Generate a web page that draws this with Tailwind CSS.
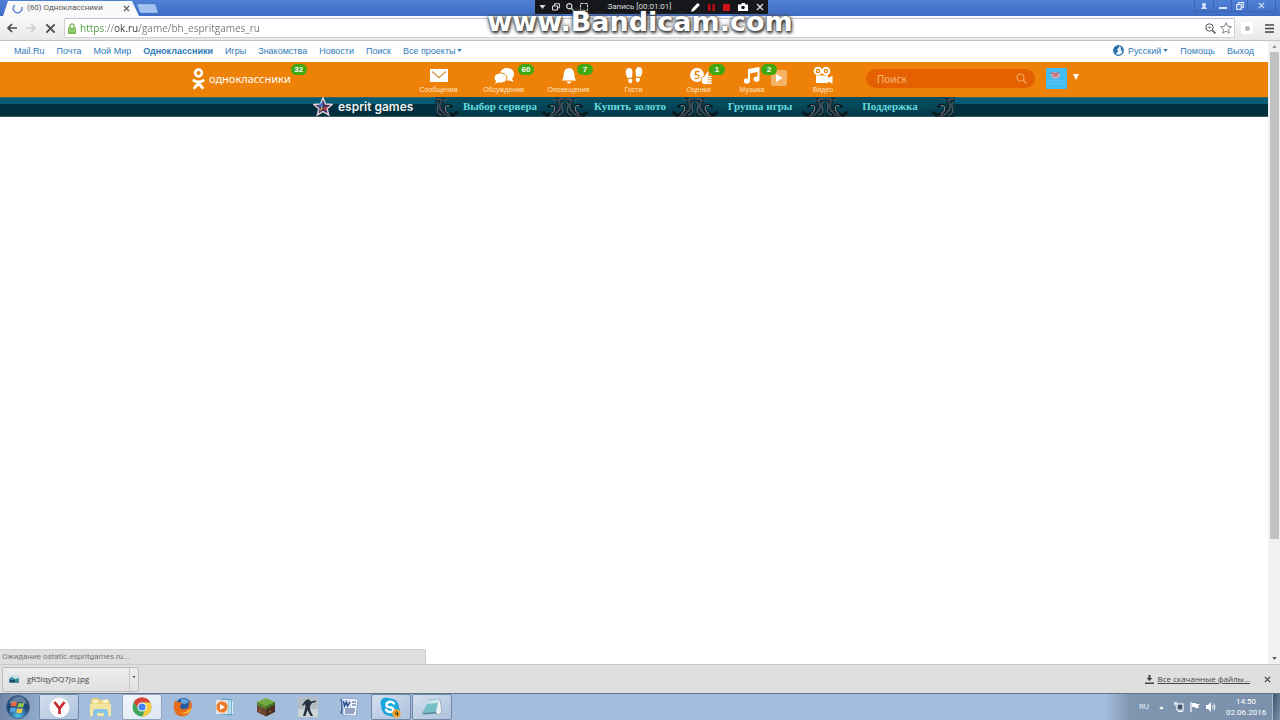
<!DOCTYPE html>
<html lang="ru">
<head>
  <meta charset="UTF-8">
  <title>(60) Одноклассники</title>
  <meta name="viewport" content="width=device-width, initial-scale=1.0">
  <script src="https://cdn.jsdelivr.net/npm/@tailwindcss/browser@4"></script>
</head>
<body class="relative flex h-screen flex-col overflow-hidden bg-white font-['Liberation_Sans',sans-serif] text-[9px] leading-3">

  <!-- shared shapes -->
  <svg class="hidden">
    <symbol id="swirl" viewBox="0 0 24 20">
      <path d="M0 0H10Q6 8 11 15L21 17 20 20H0z" fill="#101a21" fill-opacity=".6"/>
      <g fill="none" stroke-linecap="round">
        <path d="M1 1Q7 0 5 6T8 15Q11 19 16 19" stroke="#3d4953" stroke-width="2"/>
        <path d="M1 4Q4 6 2 11T6 18" stroke="#7f8b95" stroke-width=".8"/>
        <path d="M17 9Q11 5 10 10T15 17Q20 19 22 15" stroke="#0a151c" stroke-width="2.600"/>
        <path d="M14 8Q10 7 10 11T14 17" stroke="#9aa3aa" stroke-width="1"/>
        <path d="M4 1Q8 4 12 2" stroke="#56626c" stroke-width=".8"/>
      </g>
    </symbol>
    <symbol id="caret" viewBox="0 0 6 4"><path d="M0 0h6L3 4z" fill="currentColor"/></symbol>
    <symbol id="cross" viewBox="0 0 8 8"><path d="M1 1l6 6M7 1L1 7" stroke="currentColor" stroke-width="1.4"/></symbol>
  </svg>

  <!-- title bar -->
  <header class="flex h-4 shrink-0 justify-between bg-linear-to-b from-[#4f81d6] to-[#3f6cc4]">
    <div class="flex items-start">
      <div class="flex h-4 w-[140px] items-center gap-1 bg-[#f9f9fa] pl-3 font-[Roboto,sans-serif] text-[8px] text-[#555] [clip-path:polygon(3px_100%,8px_6%,132px_6%,139px_100%)]">
        <svg class="size-[11px] shrink-0" viewBox="0 0 11 11"><path d="M3 2A4.3 4.3 0 1 0 9.6 4" fill="none" stroke="#5b7fd8" stroke-width="1.4"/></svg>
        <span class="w-[92px] whitespace-nowrap">(60) Одноклассники</span>
        <button aria-label="Закрыть вкладку" class="text-[#555]"><svg class="size-[7px]"><use href="#cross"/></svg></button>
      </div>
      <button aria-label="Новая вкладка" class="mt-1 -ml-1 h-[9px] w-[22px]">
        <svg class="h-full w-full" viewBox="0 0 22 9"><path d="M1 0h17q1 0 1.500 1L22 9H5Q4 9 3.500 7z" fill="#a3c4f3" stroke="#6a97e0" stroke-width=".6"/></svg>
      </button>
    </div>
    <div class="flex h-3 pr-1 text-[#d6e3fa]">
      <button aria-label="Профиль" class="flex w-5 items-center justify-center border-x border-b border-[#3c64b4]"><svg class="size-2" viewBox="0 0 8 8"><path d="M4 1a1.500 1.500 0 0 1 1 3L7 7H1l2-3a1.500 1.500 0 0 1 1-3z" fill="currentColor"/></svg></button>
      <button aria-label="Свернуть" class="flex w-[17px] items-center justify-center border-b border-[#3c64b4]"><svg class="size-2" viewBox="0 0 8 8"><path d="M0 5h8v2H0z" fill="currentColor"/></svg></button>
      <button aria-label="Восстановить" class="flex w-[17px] items-center justify-center border-x border-b border-[#3c64b4]"><svg class="size-2" viewBox="0 0 8 8"><path d="M2.500 2.500V.7h4.800v4.600H5.500M.7 2.700h4.600v4.600H.7z" fill="none" stroke="currentColor" stroke-width="1.3"/></svg></button>
      <button aria-label="Закрыть" class="flex w-7 items-center justify-center border-r border-b border-[#3c64b4]"><svg class="size-[7px]"><use href="#cross"/></svg></button>
    </div>
  </header>

  <!-- address bar -->
  <div class="flex h-[25px] shrink-0 items-center border-b border-[#c4c4c4] bg-linear-to-b from-[#f9f9fa] to-[#e9e9ea] pr-1 pl-1.5 text-[#4d4d4d]">
    <button aria-label="Назад"><svg class="size-3" viewBox="0 0 12 12"><path d="M11 6H2M6 2L2 6l4 4" fill="none" stroke="currentColor" stroke-width="1.7"/></svg></button>
    <button aria-label="Вперёд" class="ml-[7px] text-[#ccc]"><svg class="size-3" viewBox="0 0 12 12"><path d="M1 6h9M6 2l4 4-4 4" fill="none" stroke="currentColor" stroke-width="1.7"/></svg></button>
    <button aria-label="Остановить" class="ml-2"><svg class="size-[11px]"><use href="#cross"/></svg></button>
    <div class="ml-2 flex h-5 flex-1 items-center gap-1 rounded-xs border border-[#d0d0d0] border-t-[#b9c4d6] bg-white pr-0.5 pl-[3px]">
      <svg class="h-[11px] w-2" viewBox="0 0 8 11"><path d="M2 5V3a2 2 0 0 1 4 0v2" fill="none" stroke="#7cb55c" stroke-width="1.3"/><path d="M0 4.500h8V11H0z" fill="#7dbd58"/><path d="M1 6.500h6M1 8.500h6" stroke="#b4dc9b" stroke-width=".7"/></svg>
      <input type="text" aria-label="Адрес" value="https://ok.ru/game/bh_espritgames_ru" class="min-w-0 flex-1 bg-[linear-gradient(90deg,#4a9a3a_25px,#888_25px,#888_35px,#333_35px,#333_59px,#777_59px)] bg-clip-text font-['Open_Sans',sans-serif] text-[10px] leading-4 text-transparent outline-none">
      <button aria-label="Масштаб"><svg class="size-[11px]" viewBox="0 0 11 11"><circle cx="4.500" cy="4.500" r="3.700" fill="none" stroke="#555"/><path d="M2.800 4.500h3.400M4.500 2.800v3.400" stroke="#888" stroke-width=".8"/><path d="M7.300 7.300L10.400 10.400" stroke="#555" stroke-width="1.5"/></svg></button>
      <button aria-label="В закладки"><svg class="size-3" viewBox="0 0 12 12"><path d="M6 .7l1.600 3.600 3.800.4-2.900 2.600.9 3.900L6 9.200l-3.400 2 .9-3.900L.6 4.700l3.800-.4z" fill="none" stroke="#777" stroke-width=".9"/></svg></button>
    </div>
    <button aria-label="Расширение" class="ml-1.5 flex size-3 items-center justify-center rounded-xs bg-white"><span class="size-[5px] rounded-full bg-[#b5b5b5]"></span></button>
    <button aria-label="Меню" class="mr-0.5 ml-3"><svg class="size-[9px]" viewBox="0 0 9 9"><path d="M0 1h9M0 4.500h9M0 8h9" stroke="#444" stroke-width="1.6"/></svg></button>
  </div>

  <!-- page -->
  <div class="flex min-h-0 flex-1">
    <main class="flex min-w-0 flex-1 flex-col">
      <nav class="flex h-[21px] shrink-0 items-center gap-3 px-3.5 pb-0.5 whitespace-nowrap text-[#2f7ab8]">
        <a href="#">Mail.Ru</a>
        <a href="#">Почта</a>
        <a href="#">Мой Мир</a>
        <a href="#" class="font-bold">Одноклассники</a>
        <a href="#">Игры</a>
        <a href="#">Знакомства</a>
        <a href="#">Новости</a>
        <a href="#">Поиск</a>
        <button class="flex items-center gap-0.5">Все проекты <svg class="h-[3px] w-[5px]"><use href="#caret"/></svg></button>
        <button class="ml-auto flex items-center gap-0.5">
          <svg class="mr-0.5 size-[11px]" viewBox="0 0 11 11"><circle cx="5.500" cy="5.500" r="4.800" fill="#eef6fc" stroke="#236da9" stroke-width="1.2"/><path d="M1 6Q.5 1 5.500 1L6 3 4 4l1 2-2 3Q1.500 8 1 6zM7.500 1.500L10 4 9.500 7 8 5z" fill="#236da9"/></svg>
          Русский <svg class="h-[3px] w-[5px]"><use href="#caret"/></svg>
        </button>
        <a href="#">Помощь</a>
        <a href="#">Выход</a>
      </nav>

      <!-- orange toolbar -->
      <div class="flex h-[35px] shrink-0 bg-[#ee8208] pl-48 text-white">
        <a href="#" class="flex h-full w-[214px] items-center pb-0.5">
          <svg class="h-[22px] w-[13px]" viewBox="0 0 13 22" fill="none" stroke="#fff" stroke-linecap="round"><circle cx="6.500" cy="5" r="3.400" stroke-width="2.600"/><path d="M1.800 12.500Q6.500 15.500 11.200 12.500M6.500 15L2.500 19.800M6.500 15l4 4.800" stroke-width="2.800"/></svg>
          <span class="ml-1 font-['Noto_Sans',sans-serif] text-[11px]">одноклассники</span>
          <span class="-mt-[18px] h-[11px] w-4 rounded-full bg-[#40a810] text-center text-[8px] leading-[11px] font-bold">32</span>
        </a>
        <div class="flex text-center text-[7px] leading-2 text-[#ffe4c4]">
          <a href="#" class="flex w-[65px] flex-col items-center pt-1">
            <svg class="h-5 w-[18px]" viewBox="0 0 18 20"><path d="M0 3h18v13H0z" fill="#fff"/><path d="M2 5.500l7 6 7-6" fill="none" stroke="#d89a4c" stroke-width="1.400"/></svg>
            Сообщения
          </a>
          <a href="#" class="relative flex w-[65px] flex-col items-center pt-1">
            <svg class="h-5 w-5" viewBox="0 0 20 20"><path d="M13 2c4 0 7 2.600 7 6 0 2-1 3.500-2 4.500l1.500 3.500-4-1.500H12c-3 0-6-2.500-6-6.200S9 2 13 2z" fill="#fff"/><path d="M6.500 7C10 7 13 9 13 12s-3 5-6.500 5H4l-3.500 1.500L1.500 15A5 5 0 0 1 0 12c0-3 3-5 6.500-5z" fill="#fff" stroke="#ee8208" stroke-width="1"/></svg>
            Обсуждения
            <span class="absolute top-0.5 right-0.5 h-[11px] w-4 rounded-full bg-[#40a810] text-[8px] leading-[11px] font-bold text-white">60</span>
          </a>
          <a href="#" class="relative flex w-[65px] flex-col items-center pt-1">
            <svg class="h-5 w-4" viewBox="0 0 16 20"><path d="M8 2q5 .5 5.200 6 .2 4.500 2 6.500H.8q1.800-2 2-6.500Q3 2.500 8 2zM5.500 15.500h5q-.5 2-2.500 2t-2.500-2z" fill="#fff"/></svg>
            Оповещения
            <span class="absolute top-0.5 right-2 h-[11px] w-4 rounded-full bg-[#40a810] text-[8px] leading-[11px] font-bold text-white">7</span>
          </a>
          <a href="#" class="flex w-[65px] flex-col items-center pt-1">
            <svg class="h-5 w-[18px]" viewBox="0 0 18 20" fill="#fff"><path d="M4 2c2.500 0 3.600 2 3.500 4.500L7 11.500 2.500 12Q.5 8.500.7 5.500 1 2.200 4 2zM3 13.300l4-.5q1 4-1.300 4.500T3 13.300zM14 1c3 .3 3.600 3 3.200 6l-1.700 4-4.500-.8-.5-4.500Q10.500 1 14 1zM11 11.600l4 .8q-.2 4-2.500 3.800T11 11.600z"/></svg>
            Гости
          </a>
          <a href="#" class="relative flex w-[65px] flex-col items-center pt-1">
            <svg class="ml-1 h-5 w-6" viewBox="0 0 24 20"><circle cx="8" cy="9" r="7" fill="#fff"/><path d="M10.500 5.500H6.700L6.300 8.600Q10 8 10 10.500T5.700 12.500" fill="none" stroke="#ee8208" stroke-width="1.300"/><path d="M12.500 11.500l3-1.500 3-5q2 .2 1 4.500H23v9h-8l-2.500-1.500z" fill="#fff" stroke="#ee8208" stroke-width=".8"/><path d="M18.500 11.500h5M18.500 13.700h5M18.500 16h5" stroke="#ee8208" stroke-width=".7"/></svg>
            Оценки
            <span class="absolute top-0.5 right-1.5 h-[11px] w-4 rounded-full bg-[#40a810] text-[8px] leading-[11px] font-bold text-white">1</span>
          </a>
          <a href="#" class="relative flex w-[42px] flex-col items-center pt-1">
            <svg class="h-5 w-4" viewBox="0 0 16 20"><path d="M4 3L15.500 1v12a3 2.500 0 1 1-2-2.200V6L6 7.500V15a3.200 2.600 0 1 1-2-2.300z" fill="#fff"/></svg>
            Музыка
            <span class="absolute top-0.5 -right-1 z-10 h-[11px] w-4 rounded-full bg-[#40a810] text-[8px] leading-[11px] font-bold text-white">2</span>
          </a>
          <button aria-label="Играть" class="mt-2 -ml-0.5 flex size-4 items-center justify-center rounded-xs bg-[#f5b267]"><svg class="size-2" viewBox="0 0 8 8"><path d="M1 0l6.500 4L1 8z" fill="#fff"/></svg></button>
          <a href="#" class="flex w-[72px] flex-col items-center pt-1">
            <svg class="h-5 w-5" viewBox="0 0 20 20"><g fill="none" stroke="#fff" stroke-width="2"><circle cx="5" cy="5" r="3.300"/><circle cx="13" cy="5" r="3.300"/></g><circle cx="5" cy="5" r="1" fill="#fff"/><circle cx="13" cy="5" r="1" fill="#fff"/><path d="M3 9.500h12V12l4.500-2v7.500L15 15.500V17H3z" fill="#fff"/></svg>
            Видео
          </a>
        </div>
        <label class="mt-[7px] ml-[7px] flex h-[19px] w-[169px] items-center rounded-full bg-[#e46000] pr-2 pl-[11px]">
          <input type="search" placeholder="Поиск" aria-label="Поиск" class="min-w-0 flex-1 bg-transparent font-['Noto_Sans',sans-serif] text-[10px] outline-none placeholder:text-[#f8b878]">
          <svg class="size-[11px]" viewBox="0 0 11 11" fill="none" stroke="#f5a45c" stroke-width="1.200"><circle cx="4.500" cy="4.500" r="3.500"/><path d="M7 7l3.500 3.500"/></svg>
        </label>
        <button aria-label="Профиль" class="ml-[11px] flex gap-1.5 self-start pt-1.5">
          <svg class="size-[21px]" viewBox="0 0 21 21"><rect width="21" height="21" rx="1" fill="#42bdf0"/><path d="M1 13h19M1 16h19" stroke="#6fd0f5" stroke-width=".7"/><path d="M5 5l4-1 5 2-1 4-5 1-3-3z" fill="#c9a9b8"/><path d="M5 5l5 1 3-2M7 8l5-1" stroke="#d64c4c" fill="none"/></svg>
          <svg class="mt-1.5 h-[6px] w-1.5" viewBox="0 0 6 6"><path d="M0 0h6L3 6z" fill="#fff"/></svg>
        </button>
      </div>

      <!-- game menu -->
      <nav class="flex h-5 shrink-0 border-b border-[#3c5b66] bg-[linear-gradient(#2f6363_1px,#075a73_1px,#075a73_7px,#022f3d_7px)] pl-[313px]">
        <a href="#" class="flex w-[122px] items-center gap-[5px] text-[#eef3f5]">
          <svg class="size-5 shrink-0" viewBox="0 0 20 20"><path d="M10 1l2.600 6 6.400.5-4.900 4.200 1.600 6.300L10 14.700 4.300 18l1.600-6.300L1 7.500 7.400 7z" fill="#402c58" stroke="#dccdd6" stroke-width="1.500"/><path d="M10 4v7L5 9z" fill="#4a70b8"/><path d="M10 11l5-2-3 5z" fill="#c8393f"/><path d="M10 11l-3 4 1-5z" fill="#e6a440"/></svg>
          <span class="whitespace-nowrap font-[Inter,sans-serif] text-[12px] font-semibold">esprit games</span>
        </a>
        <div class="flex font-['Liberation_Serif',serif] text-[11px] font-bold text-[#62dbdf]">
          <a href="#" class="flex w-[130px] justify-between bg-linear-to-b from-[#0a4d5f] via-[#04485a] to-[#023442] pt-px"><svg class="h-[19px] w-6"><use href="#swirl"/></svg><span class="mt-0.5 whitespace-nowrap">Выбор сервера</span><svg class="h-[19px] w-6 -scale-x-100"><use href="#swirl"/></svg></a>
          <a href="#" class="flex w-[130px] justify-between bg-linear-to-b from-[#0a4d5f] via-[#04485a] to-[#023442] pt-px"><svg class="h-[19px] w-6"><use href="#swirl"/></svg><span class="mt-0.5 whitespace-nowrap">Купить золото</span><svg class="h-[19px] w-6 -scale-x-100"><use href="#swirl"/></svg></a>
          <a href="#" class="flex w-[130px] justify-between bg-linear-to-b from-[#0a4d5f] via-[#04485a] to-[#023442] pt-px"><svg class="h-[19px] w-6"><use href="#swirl"/></svg><span class="mt-0.5 whitespace-nowrap">Группа игры</span><svg class="h-[19px] w-6 -scale-x-100"><use href="#swirl"/></svg></a>
          <a href="#" class="flex w-[130px] justify-between bg-linear-to-b from-[#0a4d5f] via-[#04485a] to-[#023442] pt-px"><svg class="h-[19px] w-6"><use href="#swirl"/></svg><span class="mt-0.5 whitespace-nowrap">Поддержка</span><svg class="h-[19px] w-6 -scale-x-100"><use href="#swirl"/></svg></a>
        </div>
      </nav>

      <div class="mt-auto h-[15px] w-[426px] rounded-tr-xs border-t border-r border-[#cfcfcf] bg-[#dedede] pl-0.5 font-[Roboto,sans-serif] text-[8px] leading-3.5 text-[#777]">Ожидание ostatic.espritgames.ru...</div>
    </main>

    <!-- scrollbar -->
    <div class="flex w-3 flex-col items-center justify-between bg-[#f1f1f1] py-1 text-[#555]">
      <svg class="h-[3px] w-[5px] rotate-180 text-[#999]"><use href="#caret"/></svg>
      <div class="mt-1 h-[487px] w-[9px] bg-[#c1c1c1]"></div>
      <svg class="mt-auto h-[3px] w-[5px]"><use href="#caret"/></svg>
    </div>
  </div>

  <!-- downloads -->
  <div class="flex h-[29px] shrink-0 items-center border-t border-[#c8c8c8] bg-[#dfdfdf] pr-[9px] pl-0.5 font-['Open_Sans',sans-serif] text-[8px] text-[#444]">
    <div class="flex h-[25px] w-[137px] rounded-xs border border-[#bdbdbd] bg-linear-to-b from-[#ececec] to-[#e0e0e0]">
      <button class="flex flex-1 items-center gap-2 border-r border-[#c6c6c6] pl-1.5">
        <svg class="size-2.5" viewBox="0 0 10 10"><path d="M0 1h10v8H0z" fill="#cfe2e8"/><path d="M0 5l3-2 3 2 4-1v5H0z" fill="#3a8ba0"/><path d="M1 6h5v2H1z" fill="#1f4e63"/></svg>
        gR5lqyOQ7Jo.jpg
      </button>
      <button aria-label="Действия" class="flex w-2 justify-center pt-2"><svg class="h-0.5 w-1"><use href="#caret"/></svg></button>
    </div>
    <svg class="ml-auto size-[9px]" viewBox="0 0 9 9"><path d="M3.500 0h2v3h2l-3 3-3-3h2zM0 7.500h9V9H0z" fill="#444"/></svg>
    <a href="#" class="mr-3.5 ml-1 whitespace-nowrap underline">Все скачанные файлы...</a>
    <button aria-label="Закрыть"><svg class="size-[7px]"><use href="#cross"/></svg></button>
  </div>

  <!-- taskbar -->
  <footer class="flex h-[27px] shrink-0 border-t border-[#62738b] bg-[linear-gradient(90deg,#6f86a8,#a5bddd_60px,#a5bddd_1105px,#7f96b0_1130px,#7b90aa)]">
    <button aria-label="Пуск" class="flex w-[39px] items-center justify-center pr-1">
      <svg class="size-6" viewBox="0 0 24 24"><defs><radialGradient id="orb" cy=".9"><stop stop-color="#4fc3e8"/><stop offset="1" stop-color="#1f4878"/></radialGradient></defs><circle cx="12" cy="12" r="11.500" fill="url(#orb)" stroke="#46688f"/><path d="M5.500 7.500q3-1.800 5.700-.2l-1 4.300q-2.700-1.300-5.700.2z" fill="#e8673a"/><path d="M12.500 7.700q3 1.300 6-.3l-1.200 4.400q-3 1.300-5.800-.1z" fill="#95c54a"/><path d="M4.200 13.200q3-1.500 5.700-.2l-1 4q-2.500-1-5 .2z" fill="#55a4e3"/><path d="M11.200 13.300q3 1.200 5.800 0l-1.200 4.200q-2.800 1.200-5.600-.1z" fill="#f6c545"/><path d="M3 9Q5 2 12 1.500T21 9Q12 5 3 9z" fill="#fff" fill-opacity=".3"/></svg>
    </button>
    <div class="flex w-[413px] justify-between">
      <button aria-label="Яндекс" class="flex w-10 items-center justify-center rounded-xs border border-[#7188a8] bg-linear-to-br from-[#d3dfee] to-[#adc2dd]"><svg class="size-[21px]" viewBox="0 0 21 21"><circle cx="10.500" cy="10.500" r="10" fill="#fafafa"/><path d="M5.500 5l5 6.500L15.500 5M10.500 11v6" fill="none" stroke="#c9262c" stroke-width="2.600"/></svg></button>
      <button aria-label="Проводник" class="flex w-10 items-center justify-center"><svg class="h-[21px] w-[23px]" viewBox="0 0 23 21"><path d="M2 3l2-2h5l1 2h10l1 2v14H1z" fill="#ead37f"/><path d="M4 3h5v3H4zM14 3l5-1v4h-5z" fill="#fbf3c7"/><path d="M1 7h21v12H1z" fill="#f4e4a2"/><path d="M4 20v-5q0-3 3-3h9q3 0 3 3v5h-4v-4H8v4z" fill="#85c3e6"/></svg></button>
      <button aria-label="Chrome" class="flex w-10 items-center justify-center rounded-xs border border-[#8ea3bf] bg-linear-to-br from-[#f2f5fa] to-[#dce6f3]"><svg class="size-5" viewBox="0 0 20 20"><circle cx="10" cy="10" r="9.500" fill="#3fa65b"/><path d="M1.800 5.200A9.500 9.500 0 0 1 18.300 5.500H10Q6 6 6 11z" fill="#dc4437"/><path d="M18.300 5.500A9.500 9.500 0 0 1 10 19.500L14 12q1-4-4-6.500z" fill="#f9cd42"/><circle cx="10" cy="10" r="4.600" fill="#fff"/><circle cx="10" cy="10" r="3.600" fill="#4184ed"/></svg></button>
      <button aria-label="Firefox" class="flex w-10 items-center justify-center"><svg class="size-5" viewBox="0 0 20 20"><circle cx="10.500" cy="9" r="8" fill="#2a5b9f"/><path d="M8 2q5-1 8 3l-4 2-4-1z" fill="#5ea7d8"/><path d="M2 3q1 2 3 2l4 1-2 3q1 4 5 3 4 0 4-5l1-4q3 5 1 10-3 6.500-9 6.500Q2 19 .8 11 .5 7 2 3z" fill="#e76b1b"/><path d="M15 13q-3 4-8 2 3 3 8 1 3-2 4-6-1 2-4 3z" fill="#f8bb36"/></svg></button>
      <button aria-label="Проигрыватель" class="flex w-10 items-center justify-center"><svg class="h-[18px] w-[19px]" viewBox="0 0 19 18"><path d="M7 1l10 1v15l-10-1z" fill="#9dcbe6" stroke="#579bc3"/><path d="M15 2v14M17.500 3v13" stroke="#d5edf9"/><path d="M1 2h12v14H1z" fill="#dfe4e6"/><circle cx="7" cy="9" r="5.800" fill="#ea782a" stroke="#f5c499"/><path d="M5 6l5 3-5 3z" fill="#fff"/></svg></button>
      <button aria-label="Minecraft" class="flex w-10 items-center justify-center"><svg class="size-5" viewBox="0 0 20 20"><path d="M1 5l9 4v10.500L1 15z" fill="#6b4630"/><path d="M19 5l-9 4v10.500l9-4.500z" fill="#4b3022"/><path d="M10 1l9 4-9 4.500L1 5z" fill="#71ab3e"/><path d="M1 5l9 4.500v3L7 10v2L4 9v1L1 8z" fill="#568a2b"/><path d="M19 5l-9 4.500v3l3-2v1l3-3v1l3-2z" fill="#40701f"/><path d="M3 12l2 1v2l-2-1zM13 14l2-1v2l-2 1z" fill="#8c6143"/></svg></button>
      <button aria-label="Counter-Strike" class="flex w-10 items-center justify-center"><svg class="size-5" viewBox="0 0 20 20"><path d="M0 0h20v20H0z" fill="#b4bdc4"/><path d="M0 12h20v8H0z" fill="#ced3d5"/><path d="M9 2.500q2-1 3 1l1 1 5-1v1.500l-4 1-2 3v3l1 3 2 4h-2.500l-3-6-2 6H5l2.500-9-.5-3-2 2-1-1 3-4z" fill="#263241"/></svg></button>
      <button aria-label="Word" class="flex w-10 items-center justify-center"><svg class="size-5" viewBox="0 0 20 20"><path d="M4 1l15 1-2 17-13-1z" fill="#f2f6fc" stroke="#7590bd" stroke-width=".7"/><path d="M13 5h4M13 8h4M6 12h10M6 14h10M6 16h9" stroke="#36538e" stroke-width="1.100"/><path d="M3 2l9 1v8l-9-1z" fill="#d8e3f5"/><path d="M4.500 4l1 5 2-4 1 4L11 5" fill="none" stroke="#254987" stroke-width="1.400"/><path d="M2 2q2 7 0 15" fill="none" stroke="#3f659e" stroke-width="1.500"/></svg></button>
      <button aria-label="Skype" class="flex w-10 items-center justify-center rounded-xs border border-[#7188a8] bg-linear-to-br from-[#d3dfee] to-[#adc2dd]"><svg class="size-[21px]" viewBox="0 0 21 21"><circle cx="6" cy="6" r="5.500" fill="#17a4e1"/><circle cx="14" cy="14" r="6" fill="#17a4e1"/><circle cx="10" cy="10" r="8.800" fill="#17a4e1"/><path d="M14 6.500Q12 4.200 9 5T6.500 8.500Q7 10 10 10.300T13.500 12.500Q13 15 10 15T6 12.800" fill="none" stroke="#fff" stroke-width="2.400" stroke-linecap="round"/><circle cx="16.500" cy="16.500" r="4.200" fill="#f4a62a"/><path d="M17 14l-2 3h4M17.500 15v4" fill="none" stroke="#59431f"/></svg></button>
      <button aria-label="Блокнот" class="flex w-10 items-center justify-center rounded-xs border border-[#7188a8] bg-linear-to-br from-[#d3dfee] to-[#adc2dd]"><svg class="h-[18px] w-[22px]" viewBox="0 0 22 18"><path d="M9 2l10-1 2 14-5 2z" fill="#edf1f3" stroke="#87969f" stroke-width=".6"/><path d="M8 3l10-2-3 13-14 1z" fill="#75bfc6"/><path d="M8 3l10-2-1 4-11 1z" fill="#c9e5e9"/><path d="M1 15l14-1 .5 1.500L3 16.500z" fill="#4b8992"/></svg></button>
    </div>
    <div class="ml-auto flex items-center font-[Roboto,sans-serif] text-[8px] text-white">
      <button aria-label="Язык" class="text-[#e8eef6]">RU</button>
      <button aria-label="Скрытые значки" class="ml-2.5"><svg class="h-[3px] w-[5px] rotate-180"><use href="#caret"/></svg></button>
      <svg class="ml-2.5 size-2.5" viewBox="0 0 10 10"><path d="M3 2h6v6H3z" fill="#41566e" stroke="#fff" stroke-width="1.200"/><path d="M0 1h4M1 0v4M4 9.500h5" stroke="#fff"/></svg>
      <svg class="ml-1.5 size-2.5" viewBox="0 0 10 10"><path d="M1 0v10" stroke="#fff" stroke-width="1.200"/><path d="M2 1h4v1h4L8 4l1 2H5V5H2z" fill="#fff"/></svg>
      <svg class="ml-1.5 size-2.5" viewBox="0 0 10 10"><path d="M0 3h2l3-3v10L2 7H0z" fill="#fff"/><path d="M6.500 3q1 2 0 4M8 1.500q2 3.500 0 7" fill="none" stroke="#fff" stroke-width=".9"/></svg>
      <div class="ml-2.5 w-10 text-center leading-[11px] whitespace-nowrap"><p>14:50</p><p>02.06.2016</p></div>
      <button aria-label="Показать рабочий стол" class="ml-1.5 h-full w-2 border-l border-[#a9bacd] bg-linear-to-br from-[#3f566f] to-[#7c92ab]"></button>
    </div>
  </footer>

  <!-- recorder panel and watermark lie over the browser -->
  <div class="absolute top-0 left-[535px] flex h-3.5 w-[233px] items-center bg-[#16171b] px-1 font-[Roboto,sans-serif] text-[8px] text-[#ddd]">
    <button aria-label="Меню записи"><svg class="h-1 w-[7px]"><use href="#caret"/></svg></button>
    <button aria-label="Окно" class="ml-1.5"><svg class="size-2" viewBox="0 0 8 8" fill="none" stroke="currentColor"><path d="M2.500 3V.8h5v4H5.500M.5 3h5v4h-5z"/></svg></button>
    <button aria-label="Найти" class="ml-1.5"><svg class="size-2" viewBox="0 0 8 8" fill="none" stroke="currentColor" stroke-width="1.200"><circle cx="3.300" cy="3.300" r="2.600"/><path d="M5 5l3 3"/></svg></button>
    <button aria-label="Область" class="ml-1.5"><svg class="size-2" viewBox="0 0 8 8" fill="none" stroke="currentColor" stroke-dasharray="3 1"><path d="M.5.500h7v7h-7z"/></svg></button>
    <span class="mx-auto">Запись [00:01:01]</span>
    <button aria-label="Рисование"><svg class="size-[9px]" viewBox="0 0 9 9"><path d="M0 9l1-3 5.500-6L9 2 3 8z" fill="#fff"/></svg></button>
    <button aria-label="Пауза" class="ml-2"><svg class="size-[7px]" viewBox="0 0 7 7"><path d="M0 0h2.400v7H0zM4.400 0h2.400v7H4.400z" fill="#c00a12"/></svg></button>
    <button aria-label="Стоп" class="ml-2 size-[7px] bg-[#d0101a]"></button>
    <button aria-label="Снимок" class="ml-2"><svg class="h-2 w-2.5" viewBox="0 0 10 8"><path d="M0 1.500h3L4 0h3l.5 1.500H10V8H0z" fill="#fff"/><circle cx="5" cy="4.500" r="1.800" fill="#16171b"/></svg></button>
    <button aria-label="Закрыть" class="ml-2"><svg class="size-2"><use href="#cross"/></svg></button>
  </div>
  <p class="pointer-events-none absolute inset-x-0 top-1.5 text-center font-['DejaVu_Sans',sans-serif] text-[27px] leading-8 font-bold text-white [text-shadow:0_0_2px_#444,1px_2px_3px_#333,0_0_5px_#555]">www.Bandicam.com</p>
</body>
</html>
